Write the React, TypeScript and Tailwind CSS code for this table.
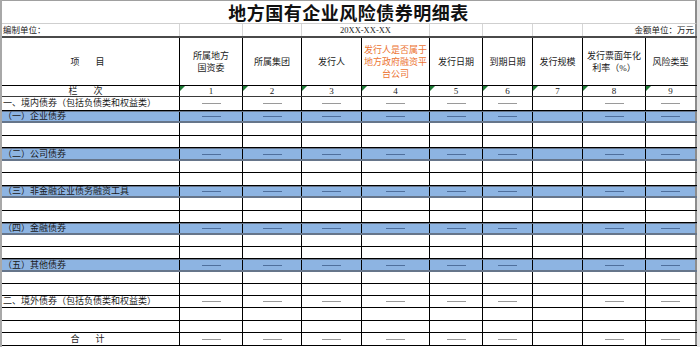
import React from "react";

const GRID =
  "grid grid-cols-[178px_63px_59px_60px_68px_53px_50px_50px_63px_51px]";
const FONT = { fontFamily: '"Liberation Serif","Noto Sans CJK SC",serif' };

type Kind = "section" | "blue" | "white" | "total";
type RowDef = { label?: string; kind: Kind; h: string };

const rows: RowDef[] = [
  { label: "一、境内债券（包括负债类和权益类）", kind: "section", h: "h-[14px]" },
  { label: "（一）企业债券", kind: "blue", h: "h-[12px]" },
  { kind: "white", h: "h-[13px]" },
  { kind: "white", h: "h-[12px]" },
  { label: "（二）公司债券", kind: "blue", h: "h-[13px]" },
  { kind: "white", h: "h-[12px]" },
  { kind: "white", h: "h-[13px]" },
  { label: "（三）非金融企业债务融资工具", kind: "blue", h: "h-[12px]" },
  { kind: "white", h: "h-[13px]" },
  { kind: "white", h: "h-[12px]" },
  { label: "（四）金融债券", kind: "blue", h: "h-[12px]" },
  { kind: "white", h: "h-[12px]" },
  { kind: "white", h: "h-[12px]" },
  { label: "（五）其他债券", kind: "blue", h: "h-[13px]" },
  { kind: "white", h: "h-[12px]" },
  { kind: "white", h: "h-[12px]" },
  { label: "二、境外债券（包括负债类和权益类）", kind: "section", h: "h-[12px]" },
  { kind: "white", h: "h-[13px]" },
  { kind: "white", h: "h-[12px]" },
  { label: "合计", kind: "total", h: "h-[13px]" },
];

const cols = [1, 2, 3, 4, 5, 6, 7, 8, 9];

function cellBorder(i: number) {
  return i === 9 ? "border-r-2 border-[#8c8c8c]" : "border-r border-black";
}

function Dash({ blue }: { blue: boolean }) {
  return (
    <div
      className={
        blue ? "w-[19px] h-px bg-[#4f6f9c]" : "w-[19px] h-px bg-[#9a9a9a]"
      }
    />
  );
}

function DataRow({ r }: { r: RowDef }) {
  const blue = r.kind === "blue";
  const hasDash = r.kind !== "white";
  const rowCls = blue
    ? `${GRID} ${r.h} bg-[#8db4e2] border-t border-b-2 border-[#66758a]`
    : `${GRID} ${r.h} border-b border-black`;
  return (
    <div className={rowCls}>
      <div className="border-r border-black flex items-center overflow-visible whitespace-nowrap text-[9px] leading-none text-[#1a1a1a]">
        {r.kind === "total" ? (
          <div className="w-full flex justify-center gap-[16px] pr-[6px]">
            <span>合</span>
            <span>计</span>
          </div>
        ) : (
          <span className="pl-[1px]">{r.label ?? ""}</span>
        )}
      </div>
      {cols.map((i) => (
        <div
          key={i}
          className={`${cellBorder(i)} flex items-center justify-center`}
        >
          {hasDash && i !== 7 ? <Dash blue={blue} /> : null}
        </div>
      ))}
    </div>
  );
}

function Tri() {
  return (
    <div className="absolute left-0 top-0 w-0 h-0 border-t-[5px] border-t-[#1e7a36] border-r-[5px] border-r-transparent" />
  );
}

export default function App() {
  return (
    <div
      className="w-[700px] h-[347px] bg-white flex text-[#1a1a1a] overflow-hidden"
      style={FONT}
    >
      <div className="w-[697px] border-l-2 border-[#a8a8a8] flex flex-col">
        {/* Title */}
        <div className="h-[24px] border-t border-[#a0a0a0] border-b border-b-[#cfcfcf] border-r-2 border-r-[#8c8c8c] flex items-center justify-center">
          <span
            className="text-[18px] font-bold leading-none tracking-[0.5px] text-[#111]"
            style={{ fontFamily: '"Noto Sans CJK SC",sans-serif' }}
          >
            地方国有企业风险债券明细表
          </span>
        </div>
        {/* Unit row */}
        <div className={`${GRID} h-[14px] border-b-2 border-[#4a4a4a] text-[8.5px] leading-none`}>
          <div className="border-r border-[#d6d6d6] flex items-center pl-[1px]">
            编制单位：
          </div>
          <div className="border-r border-[#d6d6d6]" />
          <div className="border-r border-[#d6d6d6]" />
          <div className="col-span-2 border-r border-[#d6d6d6] flex items-center justify-center">
            20XX-XX-XX
          </div>
          <div className="border-r border-[#d6d6d6]" />
          <div className="border-r border-[#d6d6d6]" />
          <div className="border-r border-[#d6d6d6]" />
          <div className="col-span-2 border-r-2 border-[#8c8c8c] flex items-center justify-end pr-[1px]">
            金额单位：万元
          </div>
        </div>
        {/* Header */}
        <div className={`${GRID} h-[48px] border-b border-black text-[9px] leading-[12px] text-center`}>
          <div className="border-r border-black flex items-center justify-center gap-[16px] pr-[6px]">
            <span>项</span>
            <span>目</span>
          </div>
          <div className={`${cellBorder(1)} flex items-center justify-center`}>
            所属地方
            <br />
            国资委
          </div>
          <div className={`${cellBorder(2)} flex items-center justify-center`}>
            所属集团
          </div>
          <div className={`${cellBorder(3)} flex items-center justify-center`}>
            发行人
          </div>
          <div
            className={`${cellBorder(4)} flex items-center justify-center text-[#ec7433]`}
          >
            <span>
              发行人是否属于
              <br />
              地方政府融资平
              <br />
              台公司
            </span>
          </div>
          <div className={`${cellBorder(5)} flex items-center justify-center`}>
            发行日期
          </div>
          <div className={`${cellBorder(6)} flex items-center justify-center`}>
            到期日期
          </div>
          <div className={`${cellBorder(7)} flex items-center justify-center`}>
            发行规模
          </div>
          <div className={`${cellBorder(8)} flex items-center justify-center`}>
            <span>
              发行票面年化
              <br />
              利率（%）
            </span>
          </div>
          <div className={`${cellBorder(9)} flex items-center justify-center`}>
            风险类型
          </div>
        </div>
        {/* Column numbers */}
        <div className={`${GRID} h-[11px] border-b border-[#3a3a3a] text-[9px] leading-none`}>
          <div className="border-r border-black flex items-center justify-center gap-[16px] pr-[10px]">
            <span>栏</span>
            <span>次</span>
          </div>
          {cols.map((i) => (
            <div
              key={i}
              className={`${cellBorder(i)} relative flex items-center justify-center`}
            >
              <Tri />
              {i}
            </div>
          ))}
        </div>
        {rows.map((r, idx) => (
          <DataRow key={idx} r={r} />
        ))}
      </div>
      <div className="w-[3px] h-full bg-[#e4e4e4]" />
    </div>
  );
}
